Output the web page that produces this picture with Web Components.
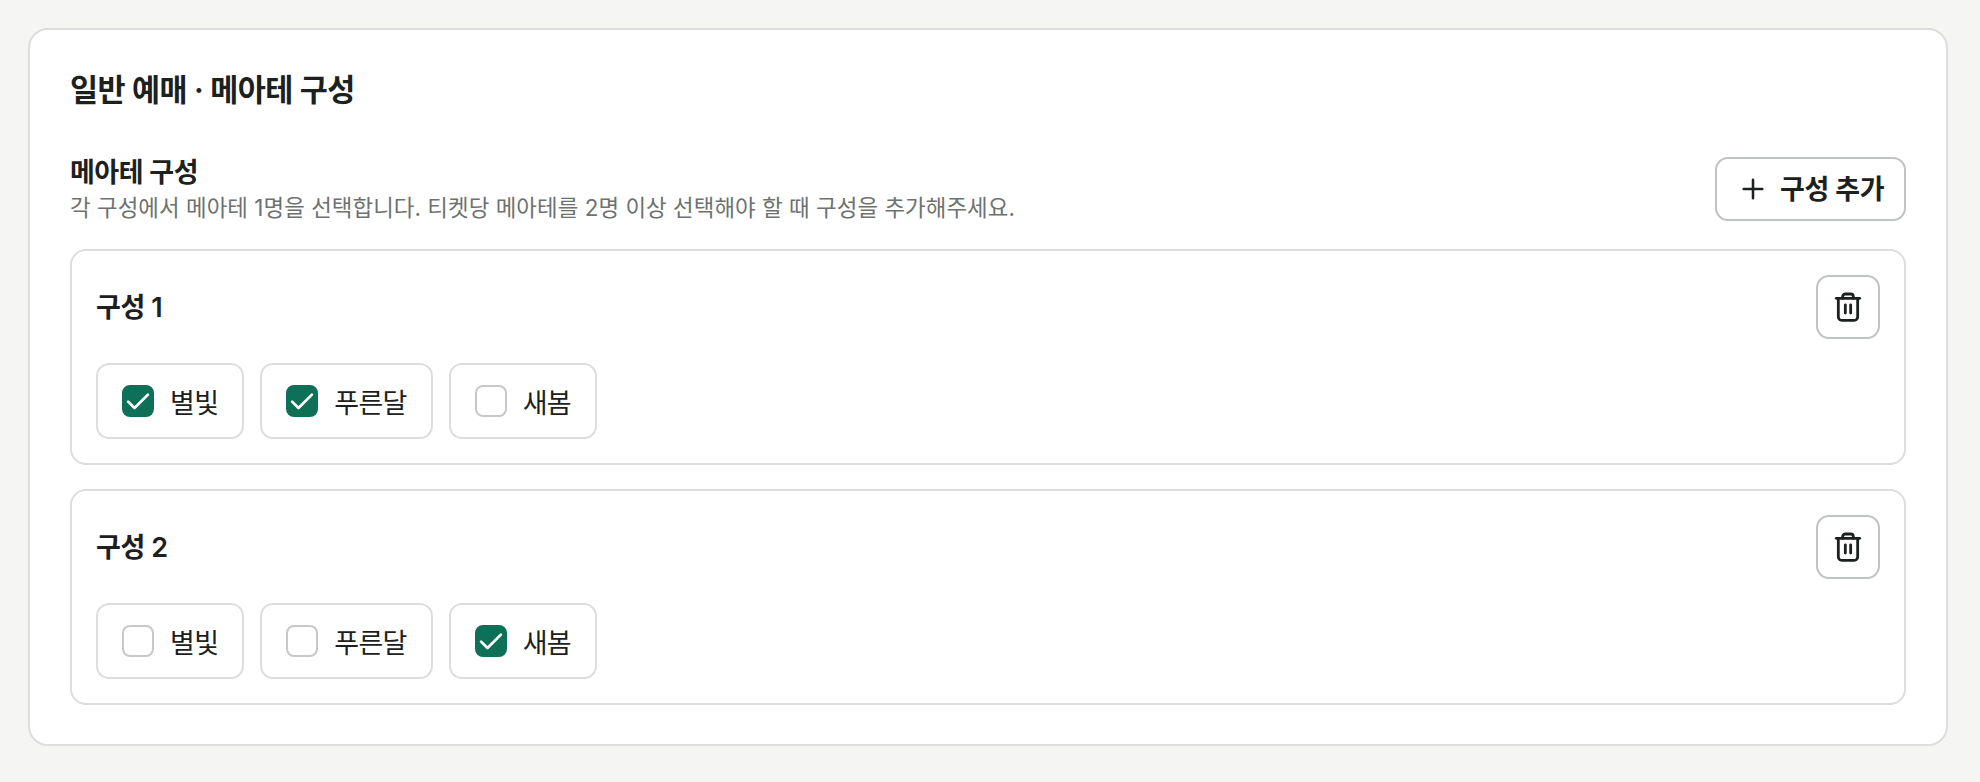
<!DOCTYPE html>
<html lang="ko"><head><meta charset="utf-8"><title>메아테 구성</title>
<style>
html,body{margin:0;height:100%}
body{background:#f5f5f3;font-family:Inter,"Noto Sans CJK KR",sans-serif;color:#1c2120;padding:28px 32px 36px 28px;box-sizing:border-box;width:1980px;height:782px;overflow:hidden}
</style></head><body>
<template id="t-panel"><style>
:host{display:block;background:#fff;border:2px solid #dcdedd;border-radius:20px;padding:38px 40px;box-sizing:border-box;height:718px}
h2{margin:0;font-size:30.500px;line-height:44px;font-weight:600;letter-spacing:-.6px}
.head{display:flex;justify-content:space-between;align-items:flex-start;margin-top:45px;margin-bottom:27px}
h3{margin:0;font-size:27px;line-height:32px;font-weight:600;letter-spacing:-.5px}
p{margin:5px 0 0;font-size:22.4px;line-height:28px;color:#6d7170;letter-spacing:.06px}
.list{display:flex;flex-direction:column;gap:24px}
</style><h2><slot name="title"></slot></h2>
<div class="head"><div><h3><slot name="sub"></slot></h3><p><slot name="desc"></slot></p></div><slot name="action"></slot></div>
<div class="list"><slot></slot></div></template>

<template id="t-add"><style>
:host{display:inline-flex}
button{all:unset;box-sizing:border-box;display:inline-flex;align-items:center;gap:11px;height:64px;width:191px;padding:0 20px 0 20px;border:2px solid #bfc3c2;border-radius:13px;font:600 27px/1 Inter,"Noto Sans CJK KR",sans-serif;color:#1c2120;letter-spacing:-.4px;background:#fff;white-space:nowrap}
svg{width:32px;height:32px;flex:none}
</style><button><svg viewBox="0 0 24 24" fill="none" stroke="currentColor" stroke-width="1.9" stroke-linecap="round"><path d="M12 5v14M5 12h14"/></svg><slot></slot></button></template>

<template id="t-group"><style>
:host{display:block;border:2px solid #dcdedd;border-radius:16px;padding:24px 24px 24px;box-sizing:border-box;height:216px}
.top{display:flex;justify-content:space-between;align-items:center;margin-bottom:24px}
.name{font-size:27px;font-weight:600;letter-spacing:-.4px;margin-top:-3px}
button{all:unset;box-sizing:border-box;display:flex;align-items:center;justify-content:center;width:64px;height:64px;border:2px solid #bfc3c2;border-radius:13px;color:#1c2120}
svg{width:32px;height:32px}
.opts{display:flex;gap:16px}
</style><div class="top"><span class="name"><slot name="name"></slot></span><button aria-label="삭제"><svg viewBox="0 0 24 24" fill="none" stroke="currentColor" stroke-width="2.100" stroke-linecap="round" stroke-linejoin="round"><path d="M3.250 5.500h17.500"/><path d="M8 5.500V4.250a2 2 0 0 1 2-2h4a2 2 0 0 1 2 2V5.500"/><path d="M4.750 5.500V19.500A2.500 2.500 0 0 0 7.250 22h9.500a2.500 2.500 0 0 0 2.500-2.500V5.500"/><path d="M10 10.500v6M14 10.500v6"/></svg></button></div>
<div class="opts"><slot></slot></div></template>

<template id="t-chip"><style>
:host{display:inline-flex;align-items:center;gap:16px;height:76px;box-sizing:border-box;padding:0 24px;border:2px solid #dcdedd;border-radius:13px;font-size:27px;color:#1c2120;letter-spacing:-.7px}
.box{width:32px;height:32px;box-sizing:border-box;border-radius:8px;border:2px solid #c6c9c8;background:#fff;display:flex;align-items:center;justify-content:center}
:host([checked]) .box{background:#0f7058;border-color:#0f7058}
svg{width:28px;height:28px;display:none}
:host([checked]) svg{display:block}
</style><span class="box"><svg viewBox="0 0 24 24" fill="none" stroke="#fff" stroke-width="2.300" stroke-linecap="round" stroke-linejoin="round"><path d="M3.500 12.500 9 18 20.500 6.500"/></svg></span><slot></slot></template>

<m-panel>
<span slot="title">일반 예매 · 메아테 구성</span>
<span slot="sub">메아테 구성</span>
<span slot="desc">각 구성에서 메아테 1명을 선택합니다. 티켓당 메아테를 2명 이상 선택해야 할 때 구성을 추가해주세요.</span>
<m-add slot="action">구성 추가</m-add>
<m-group><span slot="name">구성 1</span><m-chip checked>별빛</m-chip><m-chip checked>푸른달</m-chip><m-chip>새봄</m-chip></m-group>
<m-group><span slot="name">구성 2</span><m-chip>별빛</m-chip><m-chip>푸른달</m-chip><m-chip checked>새봄</m-chip></m-group>
</m-panel>
<script>
for(const [tag,id] of [['m-panel','t-panel'],['m-add','t-add'],['m-group','t-group'],['m-chip','t-chip']]){
customElements.define(tag,class extends HTMLElement{constructor(){super();this.attachShadow({mode:'open'}).appendChild(document.getElementById(id).content.cloneNode(true));}});
}
</script>
</body></html>
